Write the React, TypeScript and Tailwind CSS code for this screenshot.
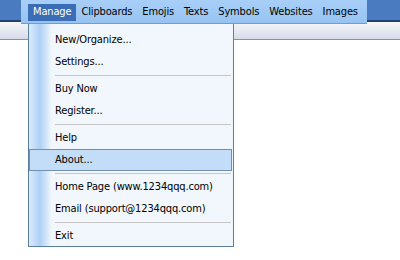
import React from "react";

const font = { fontFamily: '"DejaVu Sans Condensed", "Liberation Sans", sans-serif' };

type Entry = { label: string; active?: boolean } | "sep";

const entries: Entry[] = [
  { label: "New/Organize..." },
  { label: "Settings..." },
  "sep",
  { label: "Buy Now" },
  { label: "Register..." },
  "sep",
  { label: "Help" },
  { label: "About...", active: true },
  "sep",
  { label: "Home Page (www.1234qqq.com)" },
  { label: "Email (support@1234qqq.com)" },
  "sep",
  { label: "Exit" },
];

const menus = ["Manage", "Clipboards", "Emojis", "Texts", "Symbols", "Websites", "Images"];

export default function App() {
  return (
    <div className="relative w-[400px] h-[260px] overflow-hidden bg-white text-[11px] tracking-[-0.15px] text-black" style={font}>
      {/* window background */}
      <div className="flex flex-col">
        <div className="h-[20px] bg-[#4a7bc1]" />
        <div className="h-[2px] bg-[#23406e]" />
        <div className="h-[18px] bg-gradient-to-b from-[#f6f7fa] to-[#d8dce8] border-b border-[#8493a8]" />
        <div className="h-[220px] bg-white" />
      </div>

      {/* menu bar */}
      <div className="absolute left-[21px] top-0 w-[346px] h-[24px] bg-gradient-to-b from-[#a8cff8] to-[#97c3f2] border-b border-[#6f9dd3] flex items-start pl-[7px] pt-[4px]">
        {menus.map((m, i) => (
          <div
            key={m}
            className={
              i === 0
                ? "h-[17px] px-[5px] flex items-center bg-[#3b6cb6] text-white"
                : "h-[17px] px-[5px] flex items-center text-black"
            }
          >
            {m}
          </div>
        ))}
      </div>

      {/* dropdown */}
      <div className="absolute left-[28px] top-[24px] w-[206px] h-[223px] border border-t-0 border-[#5b7f9e] bg-[#f1f7fd]">
        <div className="absolute left-0 top-0 bottom-0 w-[22px] bg-gradient-to-r from-[#dbeafc] via-[#aed0f5] to-[#eef5fd]" />
        <div className="relative flex flex-col pt-[5px]">
          {entries.map((e, i) =>
            e === "sep" ? (
              <div key={i} className="h-[5px] pl-[26px] pr-[2px] pt-[2px]">
                <div className="h-px bg-[#c6c6c6]" />
              </div>
            ) : e.active ? (
              <div key={i} className="h-[22px] mr-[1px] flex items-center pl-[25px] bg-[#c3ddf8] border border-[#6f90b0]">
                {e.label}
              </div>
            ) : (
              <div key={i} className="h-[22px] flex items-center pl-[26px]">
                {e.label}
              </div>
            )
          )}
        </div>
      </div>
    </div>
  );
}
